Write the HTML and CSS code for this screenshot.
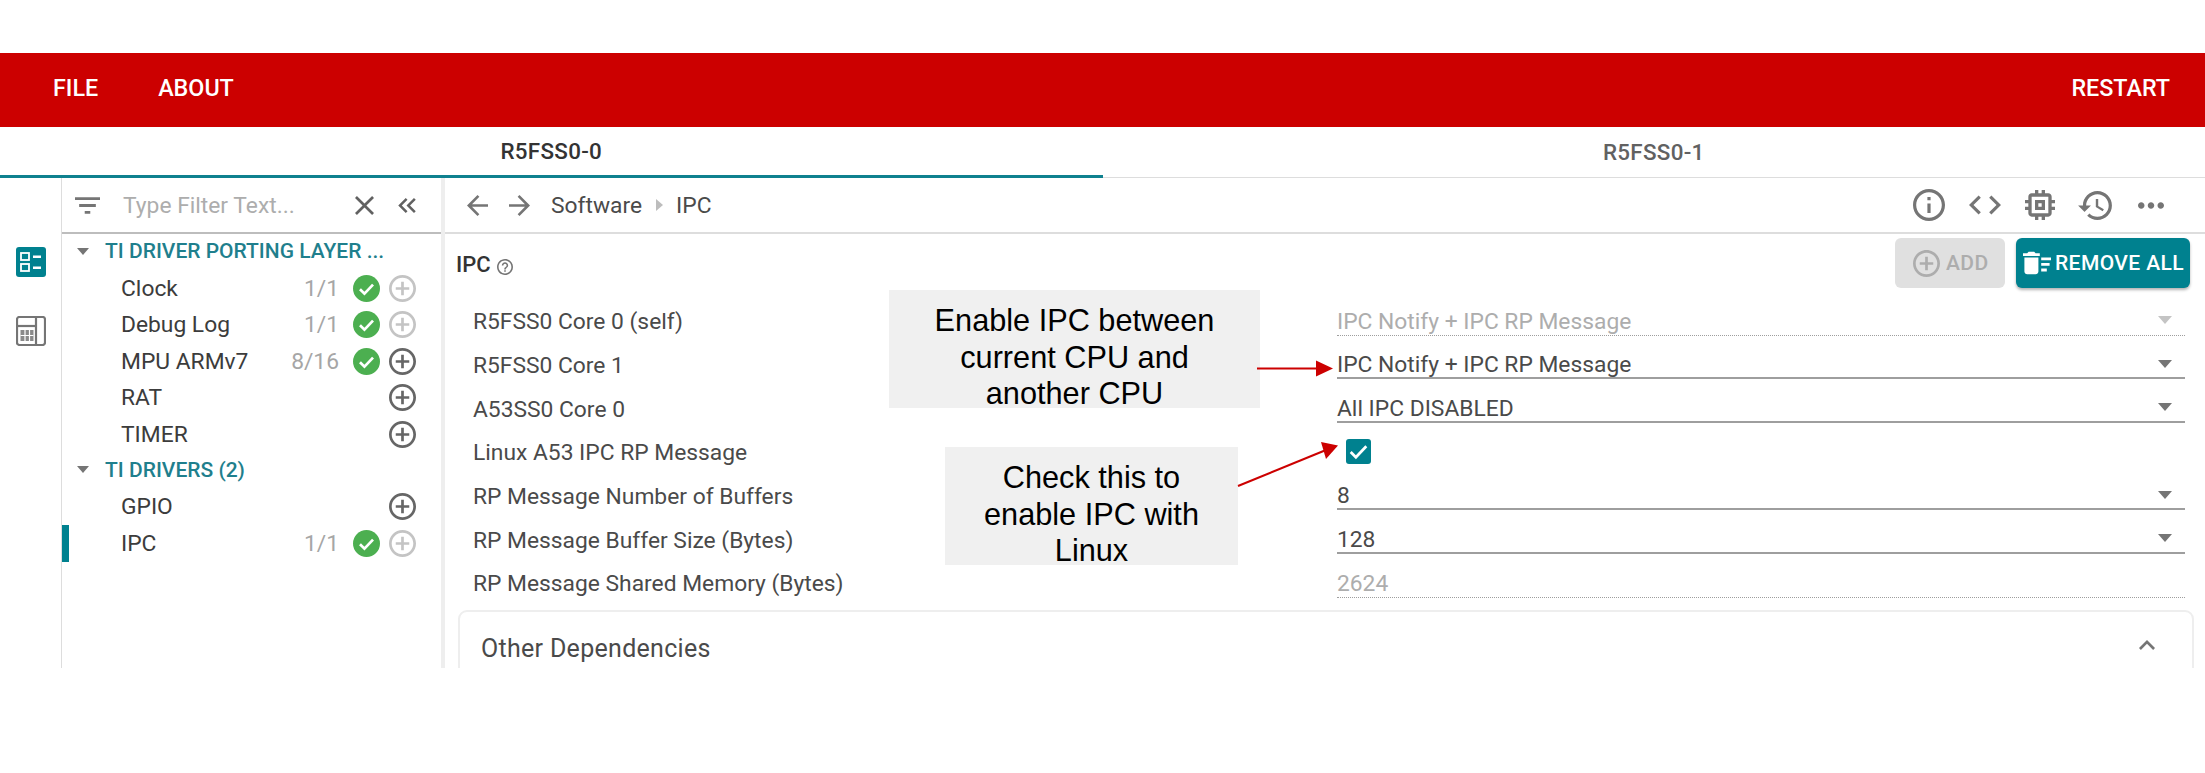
FILE: index.html

```html
<!DOCTYPE html>
<html lang="en">
<head>
  <meta charset="UTF-8" />
  <title>IPC configuration</title>
  <link rel="stylesheet" href="styles.css">
</head>
<body>

  <svg class="sprite" width="0" height="0">
    <symbol id="i-filter" viewBox="3 6 18 12"><path d="M10 18h4v-2h-4v2zM3 6v2h18V6H3zm3 7h12v-2H6v2z"/></symbol>
    <symbol id="i-close" viewBox="5 5 14 14"><path d="M19 6.41L17.59 5 12 10.59 6.41 5 5 6.41 10.59 12 5 17.59 6.41 19 12 13.41 17.59 19 19 17.59 13.41 12z"/></symbol>
    <symbol id="i-collapse" viewBox="5 6 14 12"><path d="M17.59 18L19 16.59 14.42 12 19 7.41 17.59 6l-6 6zM11 18l1.41-1.41L7.83 12l4.58-4.59L11 6l-6 6z"/></symbol>
    <symbol id="i-back" viewBox="4 4 16 16"><path d="M20 11H7.83l5.59-5.59L12 4l-8 8 8 8 1.41-1.41L7.83 13H20v-2z"/></symbol>
    <symbol id="i-forward" viewBox="4 4 16 16"><path d="M12 4l-1.41 1.41L16.17 11H4v2h12.17l-5.58 5.59L12 20l8-8z"/></symbol>
    <symbol id="i-info" viewBox="2 2 20 20"><path d="M11 7h2v2h-2zm0 4h2v6h-2zm1-9C6.48 2 2 6.48 2 12s4.48 10 10 10 10-4.48 10-10S17.52 2 12 2zm0 18c-4.41 0-8-3.59-8-8s3.59-8 8-8 8 3.59 8 8-3.59 8-8 8z"/></symbol>
    <symbol id="i-code" viewBox="2 6 20 12"><path d="M9.4 16.6L4.8 12l4.6-4.6L8 6l-6 6 6 6 1.4-1.4zm5.2 0l4.6-4.6-4.6-4.6L16 6l6 6-6 6-1.4-1.4z"/></symbol>
    <symbol id="i-chip" viewBox="3 3 18 18"><path d="M15 9H9v6h6V9zm-2 4h-2v-2h2v2zm8-2V9h-2V7c0-1.1-.9-2-2-2h-2V3h-2v2h-2V3H9v2H7c-1.1 0-2 .9-2 2v2H3v2h2v2H3v2h2v2c0 1.1.9 2 2 2h2v2h2v-2h2v2h2v-2h2c1.1 0 2-.9 2-2v-2h2v-2h-2v-2h2zm-4 6H7V7h10v10z"/></symbol>
    <symbol id="i-history" viewBox="1 3 21 18"><path d="M13 3c-4.97 0-9 4.03-9 9H1l3.89 3.89.07.14L9 12H6c0-3.87 3.13-7 7-7s7 3.13 7 7-3.13 7-7 7c-1.93 0-3.68-.79-4.94-2.06l-1.42 1.42C8.27 19.99 10.51 21 13 21c4.97 0 9-4.03 9-9s-4.03-9-9-9zm-1 5v5l4.28 2.54.72-1.21-3.5-2.08V8H12z"/></symbol>
    <symbol id="i-more" viewBox="4 10 16 4"><path d="M6 10c-1.1 0-2 .9-2 2s.9 2 2 2 2-.9 2-2-.9-2-2-2zm12 0c-1.1 0-2 .9-2 2s.9 2 2 2 2-.9 2-2-.9-2-2-2zm-6 0c-1.1 0-2 .9-2 2s.9 2 2 2 2-.9 2-2-.9-2-2-2z"/></symbol>
    <symbol id="i-add" viewBox="2 2 20 20"><path d="M13 7h-2v4H7v2h4v4h2v-4h4v-2h-4V7zm-1-5C6.48 2 2 6.48 2 12s4.48 10 10 10 10-4.48 10-10S17.52 2 12 2zm0 18c-4.41 0-8-3.59-8-8s3.59-8 8-8 8 3.59 8 8-3.59 8-8 8z"/></symbol>
    <symbol id="i-help" viewBox="2 2 20 20"><path d="M11 18h2v-2h-2v2zm1-16C6.48 2 2 6.48 2 12s4.48 10 10 10 10-4.48 10-10S17.52 2 12 2zm0 18c-4.41 0-8-3.59-8-8s3.59-8 8-8 8 3.59 8 8-3.59 8-8 8zm0-14c-2.21 0-4 1.79-4 4h2c0-1.1.9-2 2-2s2 .9 2 2c0 2-3 1.75-3 5h2c0-2.25 3-2.5 3-5 0-2.21-1.79-4-4-4z"/></symbol>
    <symbol id="i-sweep" viewBox="2 4 20 16"><path d="M15 16h4v2h-4zm0-8h7v2h-7zm0 4h6v2h-6zM3 18c0 1.1.9 2 2 2h6c1.1 0 2-.9 2-2V8H3v10zM14 5h-3l-1-1H6L5 5H2v2h12z"/></symbol>
    <symbol id="i-less" viewBox="6 8 12 7.41"><path d="M12 8l-6 6 1.41 1.41L12 10.83l4.59 4.58L18 14z"/></symbol>
    <symbol id="i-ok" viewBox="0 0 24 24"><circle cx="12" cy="12" r="12" fill="#4caf50"/><path d="M6.2 12.6l4 4 7.6-8" fill="none" stroke="#fff" stroke-width="2.4"/></symbol>
  </svg>

  <div class="app">
    <header class="menubar">
      <a class="menu-item">FILE</a>
      <a class="menu-item">ABOUT</a>
      <a class="menu-item menu-right">RESTART</a>
    </header>

    <nav class="tabs">
      <div class="tab active">R5FSS0-0</div>
      <div class="tab">R5FSS0-1</div>
    </nav>

    <div class="main">
      <aside class="rail">
        <span class="rail-on">
          <svg viewBox="0 0 30 30" width="30" height="30"><rect x="5" y="6" width="8" height="7" fill="none" stroke="#fff" stroke-width="1.8"/><rect x="5" y="17" width="8" height="7" fill="none" stroke="#fff" stroke-width="1.8"/><path d="M17 8.5h8v2.4h-8zM17 19.5h8v2.4h-8z" fill="#fff"/></svg>
        </span>
        <svg class="rail-calc" viewBox="0 0 30 30" width="30" height="30"><rect x="1" y="1" width="28" height="28" rx="2.5" fill="none" stroke="#757575" stroke-width="2.2"/><path d="M20 1v28" stroke="#757575" stroke-width="2.2"/><path d="M2 10h18" stroke="#757575" stroke-width="2.2"/><path d="M4.500 14h13v11h-13z" fill="#8a8a8a"/><path d="M9 14v11M13.500 14v11M4.500 19.500h13" stroke="#fff" stroke-width="1.200"/></svg>
      </aside>

      <section class="tree">
        <div class="filter">
          <svg class="ic filter-ic"><use href="#i-filter"/></svg>
          <span class="filter-text">Type Filter Text...</span>
          <svg class="ic close-ic"><use href="#i-close"/></svg>
          <svg class="ic collapse-ic"><use href="#i-collapse"/></svg>
        </div>

        <div class="group"><i class="tri"></i>TI DRIVER PORTING LAYER ...</div>
        <div class="item"><span class="name">Clock</span><span class="count">1/1</span><svg class="status"><use href="#i-ok"/></svg><svg class="plus off"><use href="#i-add"/></svg></div>
        <div class="item"><span class="name">Debug Log</span><span class="count">1/1</span><svg class="status"><use href="#i-ok"/></svg><svg class="plus off"><use href="#i-add"/></svg></div>
        <div class="item"><span class="name">MPU ARMv7</span><span class="count">8/16</span><svg class="status"><use href="#i-ok"/></svg><svg class="plus"><use href="#i-add"/></svg></div>
        <div class="item"><span class="name">RAT</span><svg class="plus"><use href="#i-add"/></svg></div>
        <div class="item"><span class="name">TIMER</span><svg class="plus"><use href="#i-add"/></svg></div>
        <div class="group"><i class="tri"></i>TI DRIVERS (2)</div>
        <div class="item"><span class="name">GPIO</span><svg class="plus"><use href="#i-add"/></svg></div>
        <div class="item selected"><span class="name">IPC</span><span class="count">1/1</span><svg class="status"><use href="#i-ok"/></svg><svg class="plus off"><use href="#i-add"/></svg></div>
      </section>

      <section class="pane">
        <div class="crumbs">
          <svg class="ic nav-ic"><use href="#i-back"/></svg>
          <svg class="ic nav-ic"><use href="#i-forward"/></svg>
          <span class="crumb">Software</span>
          <i class="crumb-sep"></i>
          <span class="crumb">IPC</span>
          <div class="tools">
            <svg class="ic tool-info"><use href="#i-info"/></svg>
            <svg class="ic tool-code"><use href="#i-code"/></svg>
            <svg class="ic tool-chip"><use href="#i-chip"/></svg>
            <svg class="ic tool-hist"><use href="#i-history"/></svg>
            <svg class="ic tool-more"><use href="#i-more"/></svg>
          </div>
        </div>

        <div class="title-row">
          <span class="title">IPC</span>
          <svg class="ic help-ic"><use href="#i-help"/></svg>
          <button class="btn btn-add"><svg class="ic"><use href="#i-add"/></svg>ADD</button>
          <button class="btn btn-remove"><svg class="ic"><use href="#i-sweep"/></svg>REMOVE ALL</button>
        </div>

        <div class="form">
          <div class="row"><label>R5FSS0 Core 0 (self)</label><div class="val select disabled">IPC Notify + IPC RP Message</div></div>
          <div class="row"><label>R5FSS0 Core 1</label><div class="val select">IPC Notify + IPC RP Message</div></div>
          <div class="row"><label>A53SS0 Core 0</label><div class="val select">All IPC DISABLED</div></div>
          <div class="row"><label>Linux A53 IPC RP Message</label><div class="val plain"><span class="check"><svg viewBox="0 0 24 24" width="25" height="25"><path d="M4.500 12.500l5 5 10-10.500" fill="none" stroke="#fff" stroke-width="2.600"/></svg></span></div></div>
          <div class="row"><label>RP Message Number of Buffers</label><div class="val select">8</div></div>
          <div class="row"><label>RP Message Buffer Size (Bytes)</label><div class="val select">128</div></div>
          <div class="row"><label>RP Message Shared Memory (Bytes)</label><div class="val disabled">2624</div></div>
        </div>

        <div class="card">
          <span>Other Dependencies</span>
          <svg class="ic less-ic"><use href="#i-less"/></svg>
        </div>
      </section>
    </div>
  </div>

  <!-- slide annotations on top of the screenshot -->
  <div class="note note-a">Enable IPC between current CPU and another CPU</div>
  <div class="note note-b">Check this to enable IPC with Linux</div>
  <svg class="arrows" width="2205" height="773">
    <path d="M1257 368.500H1318" stroke="#c00" stroke-width="2"/>
    <path d="M1316 360.500l17 8-17 8z" fill="#c00"/>
    <path d="M1238 486l88-36" stroke="#c00" stroke-width="2"/>
    <path d="M1321 442l17 3.500-12 13.500z" fill="#c00"/>
  </svg>

</body>
</html>
```

FILE: styles.css

```css
body {
  margin: 0;
  padding-top: 53px;
  overflow: hidden;
  background-color: #fff;
  font-family: Roboto, sans-serif;
  font-size: 22.8px;
  color: #3c3c3c;
}
.sprite {
  position: absolute;
}
.ic {
  display: block;
  fill: #757575;
  flex: none;
}
.app {
  height: 615px;
  display: flex;
  flex-direction: column;
  overflow: hidden;
}

/* top bar */
.menubar {
  height: 74px;
  flex: none;
  box-sizing: border-box;
  display: flex;
  align-items: center;
  gap: 60px;
  padding: 0 35px 5px 53px;
  background-color: #cc0000;
}
.menu-item {
  color: #fff;
  font-weight: 500;
  font-size: 23.3px;
}
.menu-right {
  margin-left: auto;
}
.tabs {
  height: 51px;
  flex: none;
  display: flex;
  border-bottom: 1px solid #ddd;
  box-sizing: border-box;
}
.tab {
  flex: 1;
  display: flex;
  align-items: center;
  justify-content: center;
  font-size: 22.4px;
  font-weight: 500;
  color: #616161;
  letter-spacing: 0.3px;
}
.tab.active {
  color: #333;
  border-bottom: 3px solid #0f818f;
  margin-bottom: -1px;
}

.main {
  flex: 1;
  display: flex;
  min-height: 0;
}

/* left icon rail */
.rail {
  width: 61px;
  flex: none;
  border-right: 1px solid #ddd;
  display: flex;
  flex-direction: column;
  align-items: center;
  padding-top: 69px;
  gap: 39px;
}
.rail-on {
  width: 30px;
  height: 30px;
  background-color: #00818f;
  border-radius: 3px;
  display: block;
}
.rail-on svg, .rail-calc {
  display: block;
}

/* tree */
.tree {
  width: 379px;
  flex: none;
  border-right: 4px solid #eee;
}
.filter {
  height: 54px;
  border-bottom: 2px solid #bdbdbd;
  display: flex;
  align-items: center;
  padding-left: 13px;
}
.filter-ic {
  width: 25px;
  height: 17px;
}
.filter-text {
  margin-left: 23px;
  color: #adadad;
  width: 232px;
}
.close-ic {
  width: 19px;
  height: 19px;
  fill: #616161;
}
.collapse-ic {
  width: 18px;
  height: 15px;
  margin-left: 24px;
  fill: #616161;
}
.group {
  height: 36.4px;
  box-sizing: border-box;
  display: flex;
  align-items: center;
  padding: 0 0 2px 15px;
  color: #1f7f8d;
  font-weight: 500;
  font-size: 21px;
  white-space: nowrap;
}
.tri {
  width: 0;
  height: 0;
  margin-right: 16px;
  border-left: 6.500px solid transparent;
  border-right: 6.500px solid transparent;
  border-top: 7px solid #757575;
}
.item {
  height: 36.4px;
  display: flex;
  align-items: center;
  padding-left: 59px;
  position: relative;
}
.item.selected::before {
  content: "";
  position: absolute;
  left: 0;
  top: 0;
  bottom: 0;
  width: 7px;
  background-color: #00818f;
}
.name {
  margin-right: auto;
}
.count {
  color: #a6a6a6;
}
.status {
  width: 27px;
  height: 27px;
  margin-left: 14px;
}
.plus {
  width: 27px;
  height: 27px;
  margin-left: 9px;
  margin-right: 25px;
  fill: #666;
}
.plus.off {
  fill: #c4c4c4;
}

/* right pane */
.pane {
  flex: 1;
  min-width: 0;
}
.crumbs {
  height: 54px;
  border-bottom: 2px solid #ddd;
  display: flex;
  align-items: center;
  padding-left: 22px;
}
.nav-ic {
  width: 21px;
  height: 21px;
  margin-right: 21px;
}
.crumb {
  color: #4a4a4a;
}
.crumb-sep {
  width: 0;
  height: 0;
  margin: 0 13px 0 14px;
  border-top: 6px solid transparent;
  border-bottom: 6px solid transparent;
  border-left: 7px solid #bdbdbd;
}
.tools {
  margin-left: auto;
  margin-right: 41px;
  display: flex;
  align-items: center;
}
.tool-info { width: 32px; height: 32px; }
.tool-code { width: 32px; height: 20px; margin-left: 24px; }
.tool-chip { width: 30px; height: 30px; margin-left: 24px; }
.tool-hist { width: 34px; height: 29px; margin-left: 23px; }
.tool-more { width: 26px; height: 7px; margin-left: 26px; }

.title-row {
  height: 58px;
  box-sizing: border-box;
  display: flex;
  align-items: center;
  padding: 0 15px 0 11px;
}
.title {
  font-weight: 500;
  font-size: 22px;
  color: #333;
  margin-top: 3px;
}
.help-ic {
  width: 16px;
  height: 16px;
  margin: 8px 0 0 6px;
}
.btn {
  height: 50px;
  border: 0;
  border-radius: 6px;
  display: flex;
  align-items: center;
  font-family: inherit;
  font-size: 21px;
  font-weight: 500;
  padding: 0;
  letter-spacing: 0.4px;
}
.btn-add {
  margin-left: auto;
  width: 110px;
  padding-left: 18px;
  gap: 6px;
  background-color: #e0e0e0;
  color: #adadad;
}
.btn-add .ic {
  width: 27px;
  height: 27px;
  fill: #adadad;
}
.btn-remove {
  margin-left: 11px;
  width: 174px;
  padding-left: 7px;
  gap: 4px;
  background-color: #00818f;
  color: #fff;
  box-shadow: 0 2px 3px rgba(0, 0, 0, 0.3);
  white-space: nowrap;
}
.btn-remove .ic {
  width: 28px;
  height: 24px;
  fill: #fff;
}

.form {
  padding: 0 20px 0 28px;
}
.row {
  height: 43.7px;
  display: flex;
  align-items: stretch;
  color: #4a4a4a;
}
.row label {
  width: 864px;
  flex: none;
  display: flex;
  align-items: center;
  padding-top: 16px;
  box-sizing: border-box;
}
.val {
  flex: 1;
  display: flex;
  align-items: center;
  box-sizing: border-box;
  border-bottom: 2px solid #9e9e9e;
  color: #4a4a4a;
  position: relative;
  padding-top: 16px;
}
.val.plain {
  border-bottom: 0;
  padding: 14px 0 0 9px;
}
.val.disabled {
  color: #adadad;
  border-bottom: 1px dotted #9e9e9e;
}
.select::after {
  content: "";
  position: absolute;
  right: 13px;
  top: 24px;
  border-left: 7.500px solid transparent;
  border-right: 7.500px solid transparent;
  border-top: 8px solid #757575;
}
.select.disabled::after {
  border-top-color: #c4c4c4;
}
.check {
  width: 25px;
  height: 25px;
  border-radius: 3px;
  background-color: #00818f;
  display: block;
}
.check svg {
  display: block;
}

.card {
  margin: 12px 11px 0 13px;
  height: 100px;
  border: 2px solid #eee;
  border-radius: 9px;
  box-sizing: border-box;
  display: flex;
  align-items: flex-start;
  justify-content: space-between;
  padding: 22px 37px 0 21px;
  font-size: 25px;
  color: #4a4a4a;
  letter-spacing: 0.3px;
}
.less-ic {
  width: 16px;
  height: 10px;
  margin-top: 6px;
}

/* annotations */
.note {
  position: absolute;
  background-color: #f0f0f0;
  color: #000;
  font-family: "Liberation Sans", Arial, sans-serif;
  font-size: 30.7px;
  line-height: 36.500px;
  text-align: center;
  box-sizing: border-box;
  height: 118px;
  padding-top: 13px;
}
.note-a {
  left: 889px;
  top: 290px;
  width: 371px;
  padding-left: 20px;
  padding-right: 20px;
}
.note-b {
  left: 945px;
  top: 447px;
  width: 293px;
  padding-left: 30px;
  padding-right: 30px;
}
.arrows {
  position: absolute;
  left: 0;
  top: 0;
}
```
